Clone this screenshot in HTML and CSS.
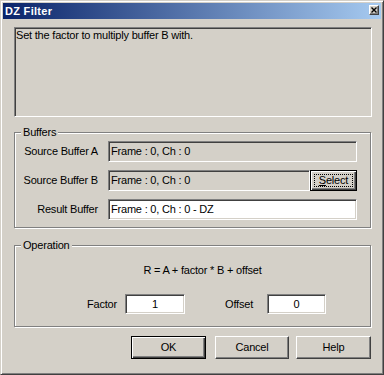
FILE: index.html
```html
<!DOCTYPE html>
<html>
<head>
<meta charset="utf-8">
<title>DZ Filter</title>
<link rel="stylesheet" href="styles.css">
</head>
<body>
<div class="window">
  <div class="titlebar">
    <span class="title">DZ Filter</span>
    <span class="close"><svg width="6" height="6" viewBox="0 0 6 6"><path d="M0.5 0.5L5.5 5.5M5.5 0.5L0.5 5.5" stroke="#000" stroke-width="1.4" fill="none"/></svg></span>
  </div>
  <div class="client">
    <div class="desc">Set the factor to multiply buffer B with.</div>

    <div class="group buffers">
      <span class="legend">Buffers</span>
      <div class="row">
        <span class="label">Source Buffer A</span>
        <div class="field ro wide">Frame : 0, Ch : 0</div>
      </div>
      <div class="row">
        <span class="label">Source Buffer B</span>
        <div class="field ro narrow">Frame : 0, Ch : 0</div>
        <div class="btn default select"><span class="focus"><u>S</u>elect</span></div>
      </div>
      <div class="row">
        <span class="label">Result Buffer</span>
        <div class="field wide">Frame : 0, Ch : 0 - DZ</div>
      </div>
    </div>

    <div class="group operation">
      <span class="legend">Operation</span>
      <div class="eq">R = A + factor * B + offset</div>
      <div class="oprow">
        <span class="flabel1">Factor</span>
        <div class="field num f1">1</div>
        <span class="flabel2">Offset</span>
        <div class="field num f2">0</div>
      </div>
    </div>

    <div class="buttons">
      <div class="btn default b-ok">OK</div>
      <div class="btn b-cancel">Cancel</div>
      <div class="btn b-help">Help</div>
    </div>
  </div>
</div>
</body>
</html>
```

FILE: styles.css
```css
html, body {
  margin: 0;
  padding: 0;
  background: #d4d0c8;
}
body {
  font-family: "Liberation Sans", Arial, sans-serif;
  font-size: 11px;
  letter-spacing: -0.2px;
  color: #000;
}
.window {
  box-sizing: border-box;
  width: 384px;
  height: 375px;
  border: 1px solid;
  border-color: #d4d0c8 #404040 #404040 #d4d0c8;
  box-shadow: inset 1px 1px #fff, inset -1px -1px #808080;
  padding: 2px;
  background: #d4d0c8;
}
.titlebar {
  height: 16px;
  display: flex;
  align-items: flex-start;
  background: linear-gradient(to right, #0a246a, #a6caf0);
}
.title {
  flex: 1;
  color: #fff;
  font-weight: bold;
  line-height: 16px;
  padding-left: 2px;
  letter-spacing: 0.3px;
}
.close {
  box-sizing: border-box;
  width: 10px;
  height: 10px;
  margin: 2px 2px 0 0;
  background: #d4d0c8;
  border: 1px solid;
  border-color: #fff #404040 #404040 #fff;
  box-shadow: inset -1px -1px #808080;
  display: flex;
  align-items: center;
  justify-content: center;
}
.close svg { display: block; }
.client {
  padding: 8px 0 0 11px;
}
.desc {
  box-sizing: border-box;
  width: 358px;
  height: 90px;
  border: 1px solid;
  border-color: #808080 #fff #fff #808080;
  box-shadow: inset 1px 1px #404040, inset -1px -1px #d4d0c8;
  padding: 1px;
  line-height: 13px;
}
.group {
  position: relative;
  box-sizing: border-box;
  width: 357px;
  border: 1px solid #808080;
  box-shadow: inset 1px 1px #fff, 1px 1px #fff;
}
.legend {
  position: absolute;
  top: -7px;
  left: 6px;
  padding: 0 2px;
  background: #d4d0c8;
  line-height: 13px;
}
.buffers {
  margin-top: 15px;
  height: 96px;
  padding: 8px 0 7px 0;
}
.row {
  display: flex;
  align-items: center;
  height: 21px;
}
.row + .row {
  margin-top: 8px;
}
.label {
  width: 83px;
  margin-right: 10px;
  text-align: right;
  line-height: 13px;
  white-space: nowrap;
}
.field {
  box-sizing: border-box;
  height: 21px;
  border: 1px solid;
  border-color: #808080 #fff #fff #808080;
  box-shadow: inset 1px 1px #404040, inset -1px -1px #d4d0c8;
  padding: 0 2px;
  line-height: 19px;
  background: #fff;
  white-space: nowrap;
}
.ro { background: #d4d0c8; }
.wide { width: 249px; }
.narrow { width: 202px; }
.btn {
  box-sizing: border-box;
  display: flex;
  align-items: center;
  justify-content: center;
  background: #d4d0c8;
  border: 1px solid;
  border-color: #fff #404040 #404040 #fff;
  box-shadow: inset -1px -1px #808080;
  line-height: 13px;
}
.btn.default {
  border-color: #000;
  box-shadow: inset 1px 1px #fff, inset -1px -1px #404040, inset -2px -2px #808080;
}
.select {
  width: 47px;
  height: 21px;
}
.focus {
  flex: 1;
  align-self: stretch;
  margin: 3px;
  border: 1px dotted #000;
  display: flex;
  align-items: center;
  justify-content: center;
}
.operation {
  margin-top: 17px;
  height: 82px;
  padding: 18px 0 12px 0;
}
.eq {
  line-height: 13px;
  text-align: center;
  padding-left: 20px;
}
.oprow {
  display: flex;
  align-items: center;
  height: 20px;
  margin-top: 17px;
}
.flabel1 {
  margin-left: 60px;
  width: 42px;
  text-align: right;
}
.flabel2 {
  width: 68px;
  text-align: right;
}
.num {
  height: 20px;
  line-height: 18px;
  text-align: center;
}
.f1 {
  margin-left: 8px;
  width: 60px;
}
.f2 {
  margin-left: 14px;
  width: 59px;
}
.buttons {
  display: flex;
  margin-top: 9px;
  padding-left: 117px;
}
.buttons .btn {
  height: 23px;
}
.b-ok { width: 75px; }
.b-cancel { width: 74px; margin-left: 9px; }
.b-help { width: 75px; margin-left: 7px; }
```
